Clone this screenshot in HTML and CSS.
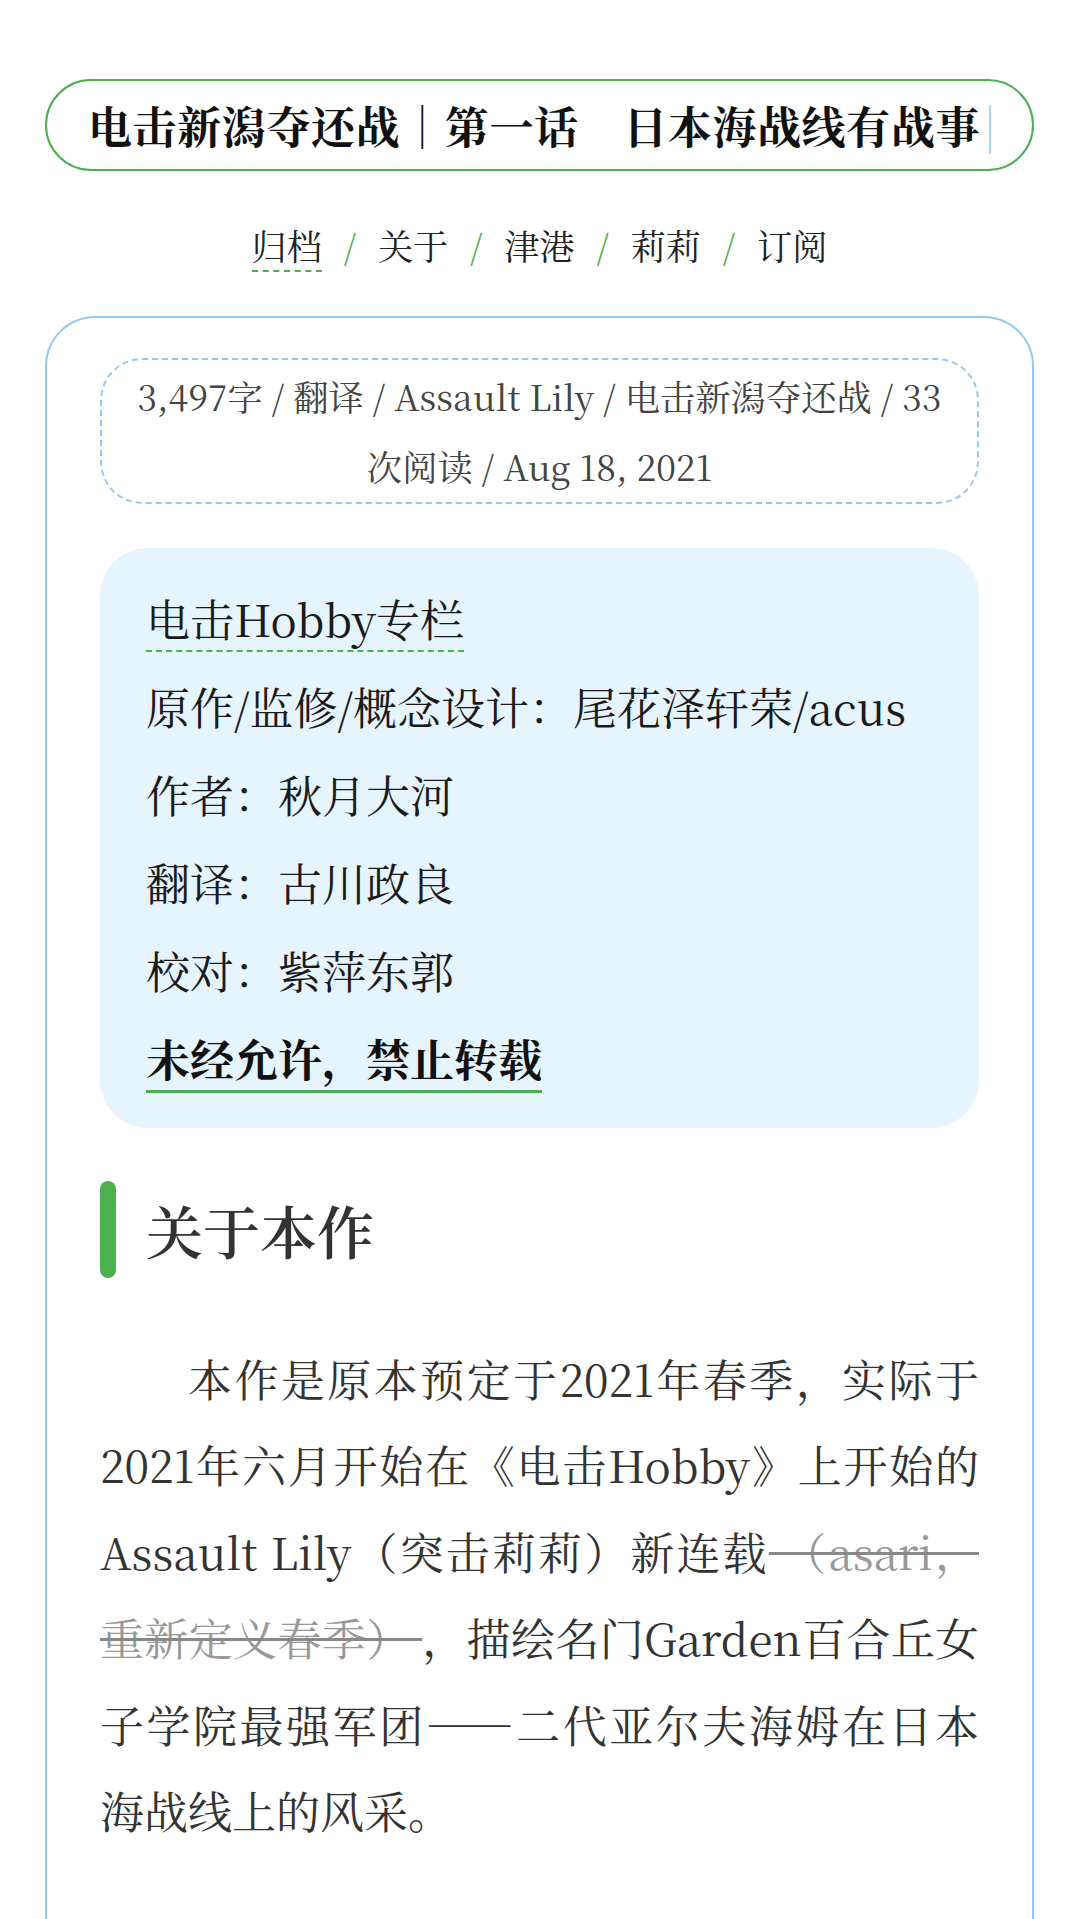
FILE: index.html
```html
<!DOCTYPE html>
<html lang="zh-CN">
<head>
<meta charset="utf-8">
<title>电击新潟夺还战｜第一话　日本海战线有战事</title>
<link rel="stylesheet" href="styles.css">
</head>
<body>
<div class="page">
  <header class="title-box">
    <h1 class="title">电击新潟夺还战｜第一话　日本海战线有战事<span class="cursor"></span></h1>
  </header>
  <nav class="nav">
    <a class="nav-link nav-active" href="#">归档</a><span class="sep">/</span><a class="nav-link" href="#">关于</a><span class="sep">/</span><a class="nav-link" href="#">津港</a><span class="sep">/</span><a class="nav-link" href="#">莉莉</a><span class="sep">/</span><a class="nav-link" href="#">订阅</a>
  </nav>
  <main class="card">
    <div class="meta">3,497字 / 翻译 / Assault Lily / 电击新潟夺还战 / 33 次阅读 / Aug 18, 2021</div>
    <div class="info">
      <p class="info-line"><a class="dash-link" href="#">电击Hobby专栏</a></p>
      <p class="info-line">原作/监修/概念设计：尾花泽轩荣/acus</p>
      <p class="info-line">作者：秋月大河</p>
      <p class="info-line">翻译：古川政良</p>
      <p class="info-line">校对：紫萍东郭</p>
      <p class="info-line"><strong class="notice">未经允许，禁止转载</strong></p>
    </div>
    <h2 class="section-title"><span class="bar"></span><span class="section-text">关于本作</span></h2>
    <p class="body-text">本作是原本预定于2021年春季，实际于2021年六月开始在《电击Hobby》上开始的Assault Lily（突击莉莉）新连载<del class="strike"> （asari，重新定义春季） </del>，描绘名门Garden百合丘女子学院最强军团——二代亚尔夫海姆在日本海战线上的风采。</p>
  </main>
</div>
</body>
</html>
```

FILE: styles.css
```css
html, body {
  margin: 0;
  padding: 0;
  background: #ffffff;
}

body {
  font-family: "Noto Serif CJK SC", "Source Han Serif SC", "Liberation Serif", "Noto Sans CJK SC", serif;
  color: #222;
}

.page {
  padding: 79px 45px 0;
}

.title-box {
  border: 2px solid #4caf50;
  border-radius: 48px;
  text-align: center;
}

.title {
  margin: 0;
  font-size: 44px;
  letter-spacing: 0.6px;
  line-height: 88px;
  font-weight: 700;
  color: #111;
  white-space: nowrap;
}

.cursor {
  display: inline-block;
  width: 2px;
  height: 49px;
  margin-left: 9px;
  background: #a6d4fa;
  vertical-align: middle;
  position: relative;
  top: -3px;
}

.nav {
  margin-top: 39px;
  text-align: center;
  font-size: 35.2px;
  line-height: 70px;
}

.nav-link {
  color: #222;
  text-decoration: none;
}

.nav-active {
  border-bottom: 2px dashed #4caf50;
}

.sep {
  display: inline-block;
  width: 56px;
  text-align: center;
  color: #4caf50;
}

.card {
  margin-top: 36px;
  border: 2px solid #90caf9;
  border-bottom: none;
  border-radius: 50px 50px 0 0;
  padding: 40px 53px 60px;
  min-height: 1600px;
}

.meta {
  border: 2px dashed #90caf9;
  border-radius: 42px;
  padding: 1px 34px;
  font-size: 35.3px;
  line-height: 70px;
  text-align: center;
  color: #444;
}

.info {
  margin-top: 44px;
  background: #e6f4fe;
  border-radius: 48px;
  padding: 26px 46px;
}

.info-line {
  margin: 0;
  font-size: 44px;
  line-height: 88px;
  color: #1a1a1a;
}

.dash-link {
  color: #1a1a1a;
  text-decoration: none;
  border-bottom: 2px dashed #4caf50;
}

.notice {
  font-weight: 700;
  color: #111;
  border-bottom: 3px solid #4caf50;
}

.section-title {
  margin: 53px 0 0;
  display: flex;
  align-items: stretch;
  gap: 30px;
  font-size: 57px;
  line-height: 97px;
  font-weight: 600;
  color: #333;
}

.bar {
  width: 16px;
  border-radius: 8px;
  background: #4caf50;
}

.body-text {
  margin: 57px 0 0;
  font-size: 44px;
  line-height: 86.4px;
  text-indent: 2em;
  text-align: justify;
  color: #333;
}

.strike {
  color: #999;
  text-decoration: line-through;
  text-decoration-color: #888;
  text-decoration-thickness: 3px;
}
```
